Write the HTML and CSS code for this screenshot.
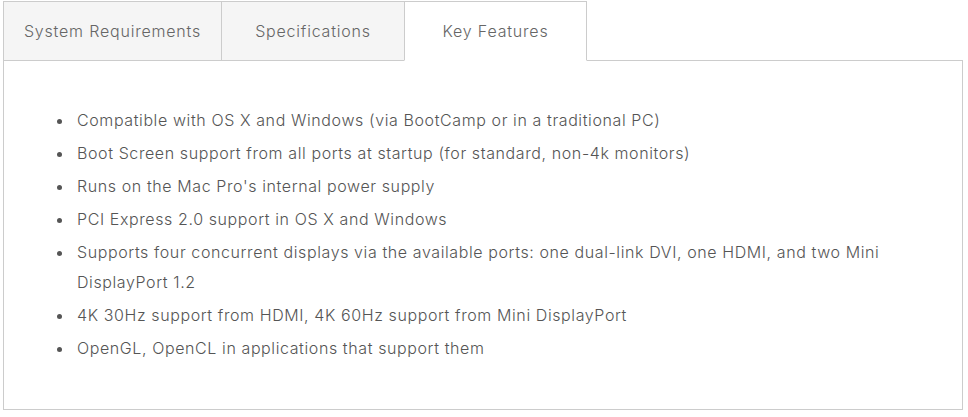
FILE: index.html
```html
<!DOCTYPE html>
<html>
<head>
    <link rel="stylesheet" href="styles.css">
</head>
<body>
    <div class="tabs">
        <div class="tab-bar">
            <div class="tab tab-sys">System Requirements</div>
            <div class="tab tab-spec">Specifications</div>
            <div class="tab tab-key active">Key Features</div>
        </div>
        <div class="panel">
            <ul class="features">
                <li>Compatible with OS X and Windows (via BootCamp or in a traditional PC)</li>
                <li>Boot Screen support from all ports at startup (for standard, non-4k monitors)</li>
                <li>Runs on the Mac Pro's internal power supply</li>
                <li>PCI Express 2.0 support in OS X and Windows</li>
                <li>Supports four concurrent displays via the available ports: one dual-link DVI, one HDMI, and two Mini DisplayPort 1.2</li>
                <li>4K 30Hz support from HDMI, 4K 60Hz support from Mini DisplayPort</li>
                <li>OpenGL, OpenCL in applications that support them</li>
            </ul>
        </div>
    </div>
</body>
</html>
```

FILE: styles.css
```css
body {
    font-family: Inter, "Open Sans", sans-serif;
    background-color: #fff;
    margin: 0;
    padding: 1px 5px 0 3px;
}
.tabs {
    width: 960px;
}
.tab-bar {
    display: flex;
    position: relative;
    z-index: 1;
}
.tab {
    box-sizing: border-box;
    height: 60px;
    display: flex;
    align-items: center;
    justify-content: center;
    background-color: #f5f5f5;
    border: 1px solid #ccc;
    border-right: none;
    color: #666;
    font-size: 16px;
    font-weight: 300;
    letter-spacing: 0.8px;
}
.tab-sys {
    width: 218px;
}
.tab-spec {
    width: 183px;
}
.tab-key {
    width: 183px;
    border-right: 1px solid #ccc;
}
.tab.active {
    background-color: #fff;
    border-bottom-color: #fff;
}
.panel {
    box-sizing: border-box;
    height: 350px;
    margin-top: -1px;
    border: 1px solid #ccc;
    padding: 44px 40px 0 50px;
}
.features {
    margin: 0;
    padding: 0 0 0 20px;
    color: #555;
    font-size: 16px;
    font-weight: 300;
    letter-spacing: 0.6px;
    line-height: 30px;
}
.features li {
    margin-bottom: 3px;
    padding-left: 3px;
}
```
